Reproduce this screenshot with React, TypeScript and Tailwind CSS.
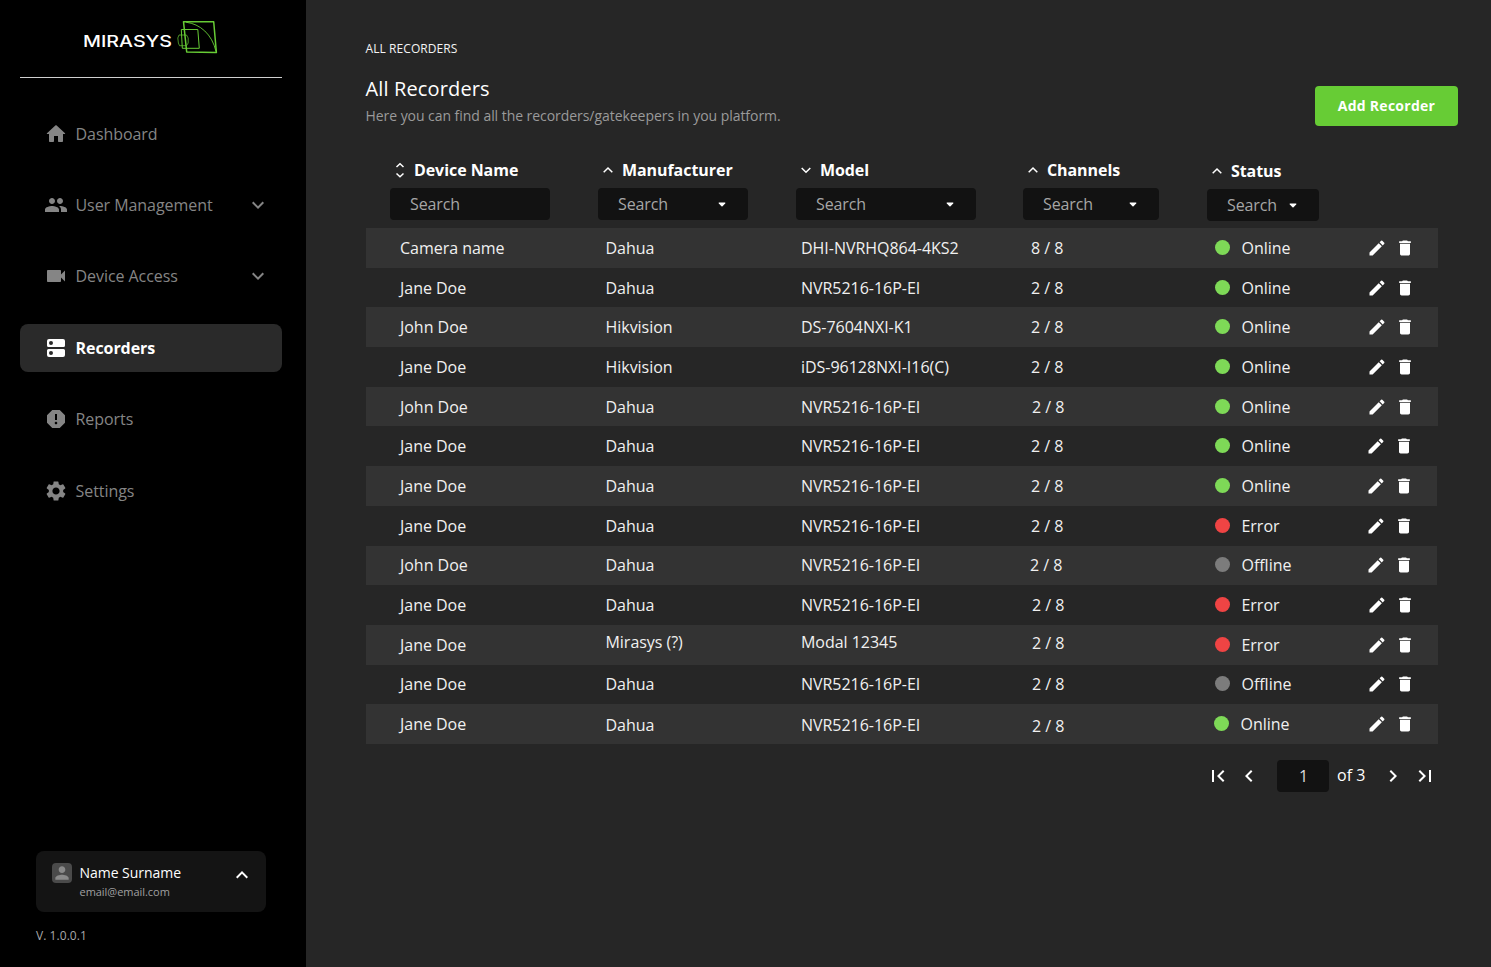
import { MdPeople, MdVideocam, MdReport, MdSettings, MdEdit, MdDelete, MdPerson, MdExpandMore, MdExpandLess, MdChevronLeft, MdChevronRight, MdFirstPage, MdLastPage } from "react-icons/md";

function HomeIcon() {
  return (
    <svg viewBox="0 0 24 24" className="size-6" fill="currentColor">
      <path d="M10 19v-5h4v5c0 .55.45 1 1 1h3c.55 0 1-.45 1-1v-7h1.7c.46 0 .68-.57.33-.87L12.67 3.6c-.38-.34-.96-.34-1.34 0l-8.36 7.53c-.34.3-.13.87.33.87H5v7c0 .55.45 1 1 1h3c.55 0 1-.45 1-1z" />
    </svg>
  );
}

function RecorderIcon() {
  return (
    <svg viewBox="0 0 24 24" className="size-6" fill="currentColor" fillRule="evenodd">
      <path d="M5 3h14a2 2 0 0 1 2 2v4.5a1.5 1.5 0 0 1-1.5 1.5h-15A1.5 1.5 0 0 1 3 9.5V5a2 2 0 0 1 2-2zM7 5a2 2 0 1 0 0 4 2 2 0 0 0 0-4zM4.5 13h15a1.5 1.5 0 0 1 1.5 1.5V19a2 2 0 0 1-2 2H5a2 2 0 0 1-2-2v-4.5A1.5 1.5 0 0 1 4.5 13zM7 15a2 2 0 1 0 0 4 2 2 0 0 0 0-4z" />
    </svg>
  );
}

function LogoMark() {
  return (
    <svg viewBox="0 0 40 34" className="h-[34px] w-10 overflow-visible" fill="none" stroke="#67cc35">
      <path d="M5.5 1.7H35.7L38.4 32.6L8.7 32Z" strokeWidth="1.5" strokeLinejoin="round" />
      <path d="M8 2.2C22 4 34 14 38 31.5" strokeWidth=".9" />
      <path d="M3.3 9.5H19.8L21.3 28.3H4.3Z" strokeWidth="1" />
      <path d="M1 15H8.5L10.2 18V23L8.5 25.7H1.5L.4 23L-.2 18Z" strokeWidth=".7" />
    </svg>
  );
}

const nav = [
  { label: "Dashboard", icon: <HomeIcon /> },
  { label: "User Management", icon: <MdPeople size={24} />, more: true },
  { label: "Device Access", icon: <MdVideocam size={24} />, more: true },
  { label: "Recorders", icon: <RecorderIcon />, active: true },
  { label: "Reports", icon: <MdReport size={24} /> },
  { label: "Settings", icon: <MdSettings size={24} /> },
];

function Sidebar() {
  return (
    <aside className="flex w-[306px] shrink-0 flex-col bg-black">
      <div className="mx-5 flex h-[78px] w-[262px] justify-center border-b border-[#d0d0d0]">
        <div className="flex w-[134px] items-start pt-5">
          <svg viewBox="0 0 94 34" className="h-[34px] w-[94px]">
            <text x="-1" y="26.5" textLength="89" lengthAdjust="spacingAndGlyphs" fill="#fff" fontFamily="Inter, sans-serif" fontSize="15.5" fontWeight="500">MIRASYS</text>
          </svg>
          <LogoMark />
        </div>
      </div>
      <nav className="mx-5 mt-[31.6px] flex w-[262px] flex-col gap-[23.4px]">
        {nav.map((n) => (
          <div
            key={n.label}
            className={
              n.active
                ? "flex h-12 items-center rounded-lg bg-[#2a2a2a] pr-3 pl-[23.5px] font-bold text-white"
                : "flex h-12 items-center rounded-lg pr-3 pl-[23.5px] text-[#858585]"
            }
          >
            {n.icon}
            <span className="ml-2 text-base tracking-[-0.06px]">{n.label}</span>
            {n.more && <MdExpandMore size={24} className="ml-auto" />}
          </div>
        ))}
      </nav>
      <div className="mx-9 mt-auto flex h-[61px] w-[230px] items-start rounded-lg bg-[#141414] pt-3 pr-3 pl-[15.5px]">
        <div className="flex size-5 items-center justify-center rounded-sm bg-[#4a4a4a] text-[#8a8a8a]">
          <MdPerson size={20} />
        </div>
        <div className="ml-2">
          <div className="text-sm leading-5 tracking-[-0.04px] text-white">Name Surname</div>
          <div className="text-[11px] leading-[17px] tracking-[-0.04px] text-[#a0a0a0]">email@email.com</div>
        </div>
        <MdExpandLess size={24} className="ml-auto text-white" />
      </div>
      <div className="mt-[14.5px] mb-[22.5px] ml-9 text-xs leading-[18px] tracking-[0.06px] text-[#a8a8a8]">V. 1.0.0.1</div>
    </aside>
  );
}

function SortIcon({ kind }: { kind: string }) {
  return (
    <svg viewBox="0 0 10 18" className="h-[18px] w-[10px] shrink-0" fill="none" stroke="#fff" strokeWidth="1.5">
      {kind === "both" && <path d="M1.5 6L5 2.8L8.5 6M1.5 12.5L5 15.7L8.5 12.5" />}
      {kind === "up" && <path d="M.7 11.3L5 7L9.3 11.3" />}
      {kind === "down" && <path d="M.7 7L5 11.3L9.3 7" />}
    </svg>
  );
}

function DropArrow({ className }: { className: string }) {
  return (
    <svg viewBox="0 0 8 5" className={"ml-auto h-[5px] w-2 shrink-0 " + className} fill="#fff">
      <path d="M1.2.5h5.6c.5 0 .7.5.4.9L4.5 4.2a.7.7 0 0 1-1 0L.8 1.4C.5 1 .7.5 1.2.5z" />
    </svg>
  );
}

const columns = [
  { label: "Device Name", sort: "both", outer: "w-[208px]", box: "w-40" },
  { label: "Manufacturer", sort: "up", outer: "w-[198px]", box: "w-[150px]", drop: "mr-[21.5px]" },
  { label: "Model", sort: "down", outer: "w-[227px]", box: "w-[180px]", drop: "mr-[22px]" },
  { label: "Channels", sort: "up", outer: "w-[184px]", box: "w-[136px]", drop: "mr-[22px]" },
  { label: "Status", sort: "up", outer: "w-28 pt-px", box: "w-28", drop: "mr-[22px]" },
];

function TableHeader() {
  return (
    <div className="flex h-[69px] pl-6">
      {columns.map((c) => (
        <div key={c.label} className={c.outer}>
          <div className="flex h-[29px] items-start pl-[5px]">
            <div className="pt-[2px]"><SortIcon kind={c.sort} /></div>
            <span className="ml-[9.4px] text-base leading-[23px] font-bold tracking-[-0.05px] text-white">{c.label}</span>
          </div>
          <div className={"flex h-8 items-center rounded bg-[#121212] pl-[20.5px] text-base tracking-[-0.1px] text-[#a6a6a6] " + c.box}>
            Search
            {c.drop && <DropArrow className={c.drop} />}
          </div>
        </div>
      ))}
    </div>
  );
}

const rows = [
  ["Camera name", "Dahua", "DHI-NVRHQ864-4KS2", "8 / 8", "Online"],
  ["Jane Doe", "Dahua", "NVR5216-16P-EI", "2 / 8", "Online"],
  ["John Doe", "Hikvision", "DS-7604NXI-K1", "2 / 8", "Online"],
  ["Jane Doe", "Hikvision", "iDS-96128NXI-I16(C)", "2 / 8", "Online"],
  ["John Doe", "Dahua", "NVR5216-16P-EI", "2 / 8", "Online"],
  ["Jane Doe", "Dahua", "NVR5216-16P-EI", "2 / 8", "Online"],
  ["Jane Doe", "Dahua", "NVR5216-16P-EI", "2 / 8", "Online"],
  ["Jane Doe", "Dahua", "NVR5216-16P-EI", "2 / 8", "Error"],
  ["John Doe", "Dahua", "NVR5216-16P-EI", "2 / 8", "Offline"],
  ["Jane Doe", "Dahua", "NVR5216-16P-EI", "2 / 8", "Error"],
  ["Jane Doe", "Mirasys (?)", "Modal 12345", "2 / 8", "Error"],
  ["Jane Doe", "Dahua", "NVR5216-16P-EI", "2 / 8", "Offline"],
  ["Jane Doe", "Dahua", "NVR5216-16P-EI", "2 / 8", "Online"],
];

const dots: Record<string, string> = { Online: "bg-[#7ed957]", Error: "bg-[#ef4444]", Offline: "bg-[#7c7c7c]" };

function cellShift(i: number) {
  if (i === 10) return "pb-[5px]";
  if (i === 12) return "pt-[2px]";
  return "";
}

function channelShift(i: number) {
  if (i === 8) return "-ml-px mr-px";
  if (i === 10) return "pl-px pb-[3px]";
  if (i === 12) return "pl-px pt-[3px]";
  if (i === 4 || i === 9 || i === 11) return "pl-px";
  return "";
}

function Row({ cells, i }: { cells: string[]; i: number }) {
  const shifted = i >= 5 && i <= 8;
  return (
    <div className={"flex h-[39.69px] items-center pl-[34.5px] text-base leading-[22px] tracking-[-0.03px] text-[#f0f0f0] " + (i % 2 === 0 ? "bg-[#333333] " : "") + (shifted ? "mr-[0.5px]" : "")}>
      <div className="w-[205.5px] shrink-0">{cells[0]}</div>
      <div className={"w-[195.5px] shrink-0 " + cellShift(i)}>{cells[1]}</div>
      <div className={"w-[230px] shrink-0 " + cellShift(i)}>{cells[2]}</div>
      <div className={"w-[183.5px] shrink-0 " + channelShift(i)}>{cells[3]}</div>
      <div className={"flex shrink-0 items-center " + (i === 12 ? "-ml-px w-[152px]" : "w-[151px]")}>
        <span className={"mr-3 mb-px size-[15px] rounded-full " + dots[cells[4]]} />
        {cells[4]}
      </div>
      <div className={"flex gap-2 text-white " + (shifted ? "pl-[0.2px]" : "pl-[1.2px]")}>
        <MdEdit size={20} />
        <MdDelete size={20} />
      </div>
    </div>
  );
}

function Pagination() {
  return (
    <div className="mt-4 flex h-8 items-center pl-[840px] text-base text-white">
      <MdFirstPage size={24} />
      <MdChevronLeft size={24} className="ml-[7.5px]" />
      <div className="ml-4 flex h-8 w-[52px] items-center justify-center rounded bg-[#121212] pl-px text-[#ddd]">1</div>
      <span className="ml-2 w-7 pb-px whitespace-nowrap">of 3</span>
      <MdChevronRight size={24} className="ml-4" />
      <MdLastPage size={24} className="ml-2" />
    </div>
  );
}

export default function App() {
  return (
    <div className="flex h-[967px] w-[1491px] overflow-hidden bg-[#262626] font-['Open_Sans',sans-serif] whitespace-nowrap">
      <Sidebar />
      <main className="flex flex-1 flex-col pt-10 pl-[59.5px]">
        <div className="text-xs leading-[18px] tracking-[0.08px] text-[#f4f4f4]">ALL RECORDERS</div>
        <div className="mt-[17px] flex h-[84px] justify-between pr-[33px]">
          <div>
            <h1 className="text-xl leading-7 tracking-[0.14px] text-white">All Recorders</h1>
            <p className="mt-[3px] text-sm leading-5 tracking-[-0.05px] text-[#9a9a9a]">Here you can find all the recorders/gatekeepers in you platform.</p>
          </div>
          <button className="mt-[10.5px] h-10 w-[143px] rounded bg-[#67cc35] text-sm font-bold tracking-[0.26px] text-white">Add Recorder</button>
        </div>
        <div className="w-[1072px]">
          <TableHeader />
          {rows.map((r, i) => (
            <Row key={i} cells={r} i={i} />
          ))}
          <Pagination />
        </div>
      </main>
    </div>
  );
}
